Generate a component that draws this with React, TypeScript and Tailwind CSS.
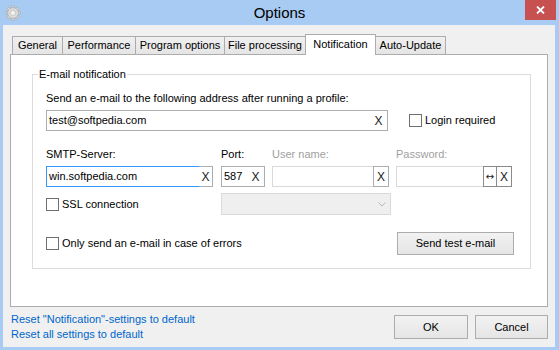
import React from "react";

function Gear() {
  const teeth = Array.from({ length: 8 }, (_, i) => i * 45);
  return (
    <svg width="16" height="16" viewBox="0 0 16 16">
      {teeth.map((a) => (
        <rect key={a} x="6.6" y="0.6" width="2.8" height="3.4" rx="0.5" fill="#d6d6d6" stroke="#a8a8a8" strokeWidth="0.6" transform={`rotate(${a} 8 8)`} />
      ))}
      <circle cx="8" cy="8" r="5.4" fill="#dcdcdc" stroke="#a8a8a8" strokeWidth="0.7" />
      <circle cx="8" cy="8" r="2.6" fill="#f4f4f4" stroke="#b0b0b0" strokeWidth="0.6" />
    </svg>
  );
}

function Check({ label }: { label: string }) {
  return (
    <div className="flex items-center">
      <div className="w-[13px] h-[13px] border border-[#707070] bg-white" />
      <span className="ml-[3px] leading-[15px]">{label}</span>
    </div>
  );
}

function Tab({ label, w, selected, first }: { label: string; w: string; selected?: boolean; first?: boolean }) {
  if (selected) {
    return (
      <div className={`relative z-10 ${w} h-[21px] -mb-[1px] -ml-[1px] border border-b-0 border-[#acacac] bg-white flex items-center justify-center pb-[1px] text-[#000]`}>
        {label}
      </div>
    );
  }
  return (
    <div className={`${w} h-[18px] ${first ? "" : "-ml-[1px]"} border border-b-0 border-[#acacac] bg-linear-to-b from-[#f0f0f0] to-[#e5e5e5] flex items-center justify-center`}>
      {label}
    </div>
  );
}

function XBox({ cls }: { cls: string }) {
  return <div className={`${cls} h-full flex items-center justify-center text-[12px] text-[#222]`}>X</div>;
}

export default function App() {
  return (
    <div className="w-[559px] h-[350px] bg-[#a7cbf2] flex flex-col font-['Liberation_Sans',Arial,sans-serif] text-[11px] text-black overflow-hidden">
      {/* Title bar */}
      <div className="h-[25px] shrink-0 grid grid-cols-[1fr_auto_1fr] items-start">
        <div className="pl-[5px] pt-[5px]">
          <Gear />
        </div>
        <div className="text-[15px] leading-[18px] pt-[4px]">Options</div>
        <div className="flex justify-end pr-[3px]">
          <div className="w-[31px] h-[20px] bg-[#c75050] flex items-center justify-center">
            <svg width="9" height="8" viewBox="0 0 9 8">
              <path d="M1 0.5 L8 7.5 M8 0.5 L1 7.5" stroke="#fff" strokeWidth="1.8" />
            </svg>
          </div>
        </div>
      </div>

      {/* Client area */}
      <div className="flex-1 ml-[3px] mr-[4px] mb-[3px] bg-[#f0f0f0] px-[7px] pt-[9px] flex flex-col">
        {/* Tabs */}
        <div className="flex items-end h-[20px] pl-[2px]">
          <Tab label="General" w="w-[51px]" first />
          <Tab label="Performance" w="w-[74px]" />
          <Tab label="Program options" w="w-[90px]" />
          <Tab label="File processing" w="w-[82px]" />
          <Tab label="Notification" w="w-[71px]" selected />
          <Tab label="Auto-Update" w="w-[71px]" />
        </div>

        {/* Panel */}
        <div className="h-[253px] border border-[#acacac] bg-white pt-[19px] pl-[21px]">
          <div className="relative w-[499px] h-[195px] border border-[#dcdcdc] pl-[13px] pt-[16px]">
            <div className="absolute left-[5px] -top-[8px] px-[1px] bg-white leading-[15px]">E-mail notification</div>

            <div className="h-[15px] leading-[15px]">Send an e-mail to the following address after running a profile:</div>

            <div className="mt-[4px] h-[21px] flex items-center">
              <div className="w-[342px] h-[21px] border border-[#abadb3] flex items-center">
                <span className="flex-1 pl-[2px]">test@softpedia.com</span>
                <XBox cls="w-[13px] mr-[2px]" />
              </div>
              <div className="ml-[21px]">
                <Check label="Login required" />
              </div>
            </div>

            <div className="mt-[16px] h-[15px] leading-[15px] flex">
              <div className="w-[175px]">SMTP-Server:</div>
              <div className="w-[51px]">Port:</div>
              <div className="w-[124px] text-[#a0a0a0]">User name:</div>
              <div className="text-[#a0a0a0]">Password:</div>
            </div>

            <div className="mt-[4px] h-[21px] flex">
              <div className="w-[167px] h-[21px] flex">
                <div className="flex-1 border border-r-0 border-[#3399ff] flex items-center pl-[2px]">win.softpedia.com</div>
                <div className="w-[14px] border border-l-0 border-[#abadb3]">
                  <XBox cls="w-full" />
                </div>
              </div>
              <div className="ml-[8px] w-[44px] h-[21px] border border-[#abadb3] flex items-center">
                <span className="flex-1 pl-[2px]">587</span>
                <XBox cls="w-[13px] mr-[2px]" />
              </div>
              <div className="ml-[7px] w-[117px] h-[21px] flex">
                <div className="flex-1 border border-r-0 border-[#d9d9d9]" />
                <div className="w-[16px] border border-[#abadb3]">
                  <XBox cls="w-full" />
                </div>
              </div>
              <div className="ml-[7px] h-[21px] flex">
                <div className="w-[88px] border border-[#d9d9d9]" />
                <div className="w-[14px] -ml-[1px] border border-[#8a8a8a] flex items-center justify-center text-[10px] font-['DejaVu_Sans',sans-serif] text-[#222]">↔</div>
                <div className="w-[16px] -ml-[1px] border border-[#8a8a8a]">
                  <XBox cls="w-full" />
                </div>
              </div>
            </div>

            <div className="mt-[6px] h-[22px] flex items-center">
              <div className="w-[175px]">
                <Check label="SSL connection" />
              </div>
              <div className="w-[170px] h-[22px] bg-[#efefef] border border-[#d9d9d9] flex items-center justify-end pr-[4px]">
                <svg width="8" height="5" viewBox="0 0 8 5">
                  <path d="M0.5 0.5 L4 4 L7.5 0.5" stroke="#b8b8b8" strokeWidth="1" fill="none" />
                </svg>
              </div>
            </div>

            <div className="mt-[17px] h-[23px] flex items-center">
              <div className="w-[351px]">
                <Check label="Only send an e-mail in case of errors" />
              </div>
              <div className="w-[117px] h-[23px] border border-[#acacac] bg-linear-to-b from-[#f2f2f2] to-[#e5e5e5] flex items-center justify-center">
                Send test e-mail
              </div>
            </div>
          </div>
        </div>

        {/* Footer */}
        <div className="mt-[5px] flex">
          <div className="pl-[1px] leading-[15px] text-[#0066cc]">
            <div>Reset "Notification"-settings to default</div>
            <div>Reset all settings to default</div>
          </div>
          <div className="ml-auto mt-[3px] flex">
            <div className="w-[74px] h-[24px] border border-[#acacac] bg-linear-to-b from-[#f2f2f2] to-[#e5e5e5] flex items-center justify-center">OK</div>
            <div className="ml-[7px] w-[73px] h-[24px] border border-[#acacac] bg-linear-to-b from-[#f2f2f2] to-[#e5e5e5] flex items-center justify-center">Cancel</div>
          </div>
        </div>
      </div>
    </div>
  );
}
